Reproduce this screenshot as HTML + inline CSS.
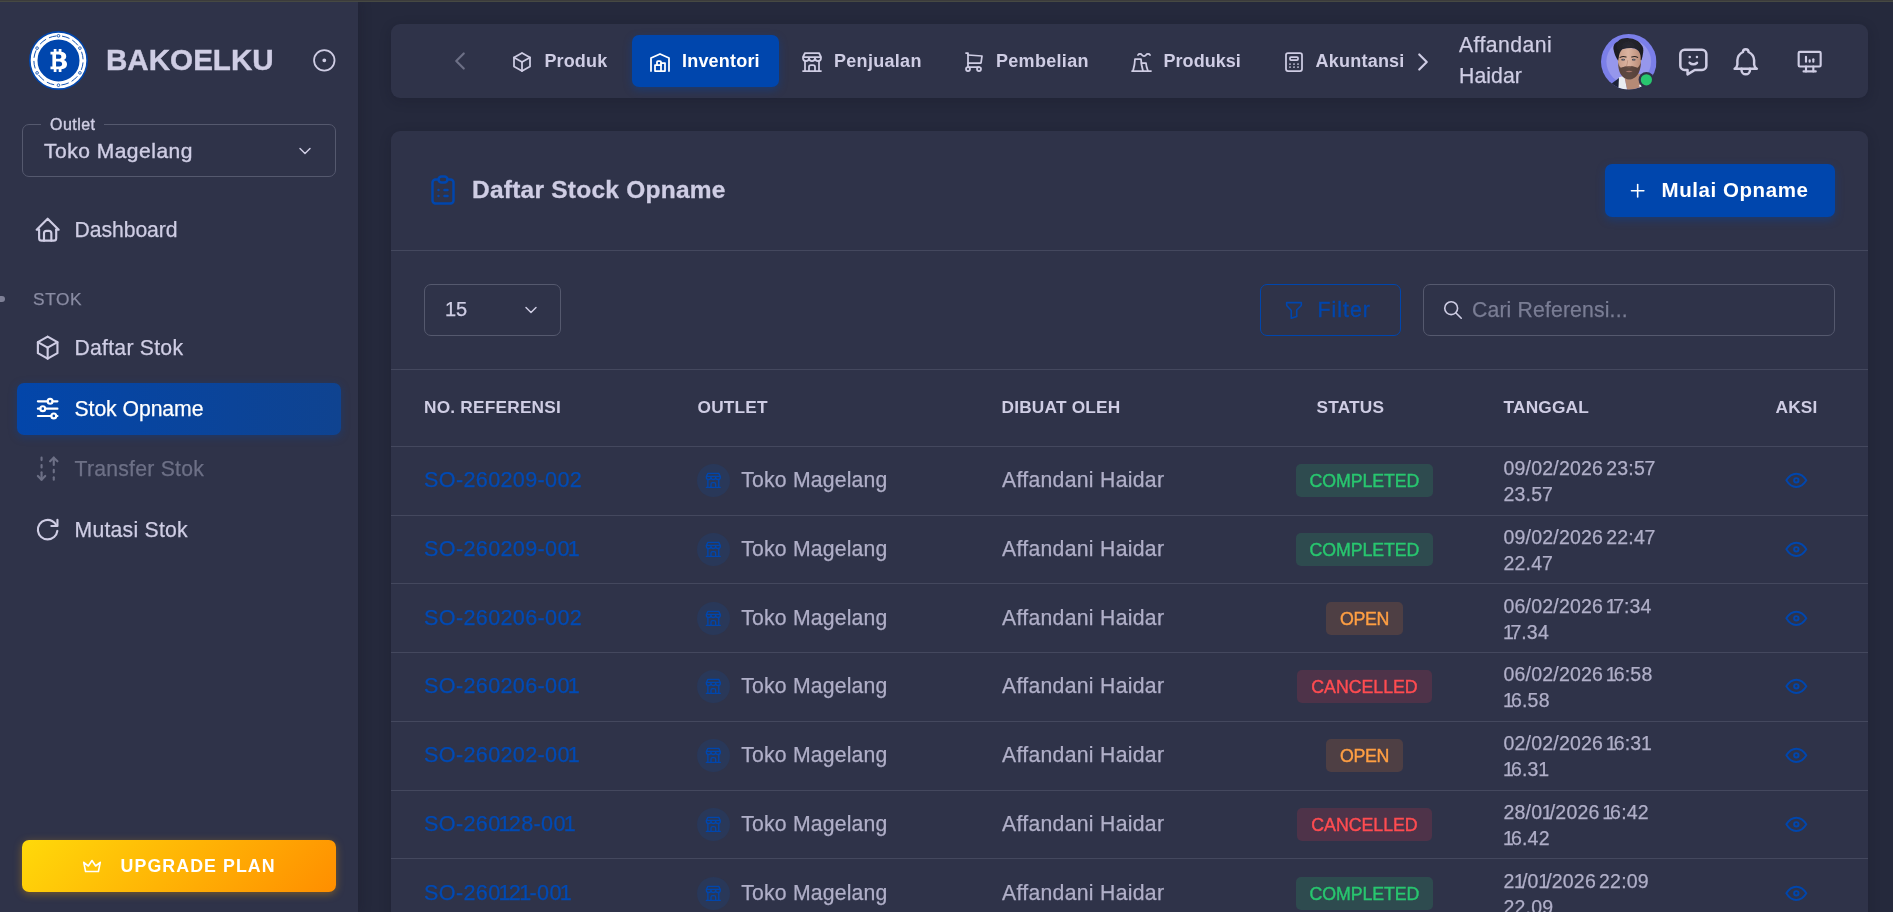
<!DOCTYPE html>
<html lang="id">
<head>
<meta charset="utf-8">
<title>Daftar Stock Opname</title>
<style>
*{box-sizing:border-box;margin:0;padding:0}
html,body{width:1893px;height:912px;overflow:hidden;background:#25293c;font-family:"Liberation Sans",sans-serif;color:#cfcde4}
body{position:relative}
svg.ic{fill:none;stroke:currentColor;stroke-width:1.75;stroke-linecap:round;stroke-linejoin:round;display:block}
.abs{position:absolute}
#side,#nav,#card,#brand,#outlet,.mi,#stok,#upg{will-change:transform}
#topstrip{left:0;top:0;width:1893px;height:2px;background:linear-gradient(#3c3c3c 0 50%,#464943 50% 100%);z-index:5}
/* sidebar */
#side{left:0;top:2px;width:358px;height:910px;background:#2f3349;box-shadow:0 0 12px rgba(19,17,32,.3)}
#brand{left:106px;top:41px;font-size:29.6px;font-weight:700;color:#cfcde4;letter-spacing:0;line-height:38px;-webkit-text-stroke:.4px #cfcde4}
#logo{left:29px;top:31px;width:59px;height:59px}
#pin{left:312.200px;top:48.200px;width:24.600px;height:24.600px;color:#cfcde4}
#outlet{left:22px;top:124px;width:314px;height:53px;border:1px solid #55596e;border-radius:7px}
#outlet .lbl{left:18px;top:-9.300px;background:#2f3349;padding:0 9px;font-size:16px;line-height:18px;color:#cfcde4;letter-spacing:.45px}
#outlet .val{left:21px;top:13px;font-size:21px;line-height:26px;color:#cfcde4;letter-spacing:.5px}
#outlet svg{left:272px;top:16px;width:20px;height:20px;color:#cfcde4}
.mi{left:17px;width:324px;height:52px;border-radius:7px;color:#cfcde4;font-size:21.200px;letter-spacing:.250px;-webkit-text-stroke:.25px currentColor}
.mi svg{position:absolute;left:16px;top:11px;width:29.33px;height:29.33px}
.mi span{position:absolute;left:57.500px;top:12.750px;line-height:26px;white-space:nowrap}
.mi.act{background:linear-gradient(270deg,#0f4390 0%,#0346aa 100%);color:#fff;box-shadow:0 2px 8px 0 rgba(0,70,173,.35)}
.mi.dis{color:#6d7086}
#stok{left:33px;top:289px;font-size:17.3px;line-height:20px;color:#8a8ca3;letter-spacing:.6px;-webkit-text-stroke:.25px currentColor}
#dot{left:0;top:296px;width:5px;height:6px;border-radius:0 3px 3px 0;background:#7e8096}
#upg{left:22px;top:840px;width:314px;height:52px;border-radius:7px;background:linear-gradient(135deg,#ffd90a 0%,#ff8e00 100%);box-shadow:0 2px 8px rgba(255,170,0,.35);color:#fff;font-weight:700;font-size:17.800px;letter-spacing:1.070px}
#upg svg{position:absolute;left:59px;top:15px;width:22px;height:22px}
#upg span{position:absolute;left:98.600px;top:16px;line-height:20px;white-space:nowrap}
/* navbar */
#nav{left:391px;top:24px;width:1477px;height:74px;background:#2f3349;border-radius:9px;box-shadow:0 3px 12px rgba(19,17,32,.22)}
.ni{position:absolute;top:11px;height:52px;border-radius:7px;color:#cfcde4;font-weight:700;font-size:18px;white-space:nowrap;letter-spacing:.3px}
.ni svg{position:absolute;top:14.500px;width:24px;height:24px;margin-left:-.5px}
.ni span{position:absolute;top:14px;line-height:24px}
.ni.act{background:#0046ad;color:#fff;box-shadow:0 3px 8px rgba(0,70,173,.4)}
#uname{left:1068px;top:4.800px;font-size:21.200px;line-height:31px;color:#cfcde4;letter-spacing:.080px}
#avatar{left:1210px;top:10px;width:55.5px;height:55.5px}
.tb{top:20px;width:34.67px;height:34.67px;color:#cfcde4}
/* card */
#card{left:391px;top:131px;width:1477px;height:800px;background:#2f3349;border-radius:9px 9px 0 0;box-shadow:0 3px 12px rgba(19,17,32,.22)}
#title{left:81px;top:43.200px;font-size:24.500px;line-height:32px;font-weight:700;color:#cfcde4;white-space:nowrap;letter-spacing:.240px;-webkit-text-stroke:.300px currentColor}
#btnadd{left:1214px;top:33px;width:230px;height:53px;border-radius:7px;background:#0046ad;color:#fff;box-shadow:0 3px 8px rgba(0,70,173,.4);font-size:20.500px;font-weight:700}
#btnadd svg{left:22.300px;top:15.800px;width:21.330px;height:21.330px}
#btnadd span{left:56.500px;top:13px;line-height:26px;white-space:nowrap;letter-spacing:.570px}
#sel{left:33px;top:153px;width:137px;height:52px;border:1px solid #55596e;border-radius:7px;font-size:20px;color:#cfcde4}
#sel span{left:20px;top:11px;line-height:26px}
#sel svg{left:96px;top:15px;width:20px;height:20px}
#btnf{left:869px;top:153px;width:141px;height:52px;border:1px solid #0046ad;border-radius:7px;color:#0046ad;font-size:21.200px}
#btnf svg{left:22px;top:14px;width:22px;height:22px}
#btnf span{left:56.500px;top:11.750px;line-height:26px;letter-spacing:1.045px;-webkit-text-stroke:.350px currentColor}
#srch{left:1032px;top:153px;width:412px;height:52px;border:1px solid #55596e;border-radius:7px;color:#7a7d94;font-size:21.200px}
#srch svg{left:18px;top:14px;width:22px;height:22px;color:#cfcde4}
#srch span{left:48px;top:11.750px;line-height:26px;white-space:nowrap;letter-spacing:.158px}
.th{top:264.500px;font-size:17.300px;line-height:22px;font-weight:700;color:#cfcde4;white-space:nowrap;letter-spacing:.200px}
.row{left:0;width:1477px;height:69px;font-size:21.200px}
.row span{white-space:nowrap}
.out,.by,.dt,.ref{-webkit-text-stroke:.250px currentColor}
#uname,#sel span,#srch span{-webkit-text-stroke:.250px currentColor}
#outlet .val,#outlet .lbl{-webkit-text-stroke:.400px currentColor}
.ref i{font-style:normal;margin:0 -2px}
.dt i{font-style:normal;margin:0 -3.100px 0 -.500px}
.ref b,.dt b{font-weight:400;margin:0 -.400px}
.rc{left:0;width:1477px;height:69px}
.ref{left:33px;top:21.200px;line-height:26px;font-size:21.600px;color:#004ab4;letter-spacing:.345px}
.oic{left:306.100px;top:18.100px;width:32.800px;height:32.800px;border-radius:50%;background:#293859;color:#0046ad}
.oic svg{position:absolute;left:7.060px;top:7.060px;width:18.670px;height:18.670px;stroke-width:1.750}
.out{left:350.300px;top:20.750px;line-height:26px;color:#b0afc8;letter-spacing:.190px}
.by{left:611px;top:20.750px;line-height:26px;color:#b0afc8;letter-spacing:.300px}
.bdg{top:18px;height:33px;border-radius:5px;font-size:17.800px;line-height:34.600px;text-align:center;letter-spacing:.080px;-webkit-text-stroke:.400px currentColor}
.bdg.c{letter-spacing:-.1px;left:905px;width:137px;background:#2e4b4f;color:#28c76f}
.bdg.o{letter-spacing:-.3px;left:935px;width:77px;background:#4e3f44;color:#ff9f43}
.bdg.x{letter-spacing:-.04px;left:906px;width:135px;background:#4e3349;color:#ff4c51}
.dt{left:1112.500px;top:10.400px;font-size:19.500px;line-height:25.400px;color:#b0afc8;letter-spacing:.200px;word-spacing:-2.500px}
.eye{left:1392.200px;top:21.200px;width:26.670px;height:26.670px;color:#0046ad}
.hr{left:0;width:1477px;height:1px;background:#44485e}
</style>
</head>
<body>
<div id="topstrip" class="abs"></div>
<div id="side" class="abs"></div>
<svg id="logo" class="abs" viewBox="0 0 58 58">
<circle cx="29" cy="29" r="29" fill="#0046ad"/>
<circle cx="29" cy="29" r="24" fill="none" stroke="#fff" stroke-width="6.700"/>
<circle cx="29" cy="29" r="24.200" fill="none" stroke="#0046ad" stroke-width=".900" stroke-dasharray="7.5 3.2 7.5 7.24" stroke-dashoffset="-3.6" transform="rotate(-90 29 29)"/>
<g fill="#fff" stroke="#0046ad" stroke-width=".8"><circle cx="29" cy="4.7" r="1.3"/><circle cx="29" cy="53.3" r="1.3"/><circle cx="7.95" cy="16.85" r="1.3"/><circle cx="50.05" cy="16.85" r="1.3"/><circle cx="7.95" cy="41.15" r="1.3"/><circle cx="50.05" cy="41.15" r="1.3"/></g>
<path fill="#fff" d="M24.3 17.6h2.7v2.6h2.2v-2.6h2.7v2.7c2.9.3 4.7 1.9 4.7 4.4 0 1.9-1 3.2-2.6 3.8 2.1.5 3.4 2 3.4 4.2 0 2.9-2.1 4.6-5.5 4.9v2.7h-2.7v-2.6h-2.2v2.6h-2.7v-2.6h-3.2v-2.8h1.9v-11.8h-1.9v-2.8h3.2zM26.6 23.1v4.2h2.7c1.6 0 2.5-.8 2.5-2.1s-.9-2.1-2.5-2.1zM26.6 30v4.8h3.2c1.8 0 2.8-.9 2.8-2.4s-1-2.4-2.8-2.4z"/>
</svg>
<div id="brand" class="abs">BAKOELKU</div>
<svg id="pin" class="abs ic" viewBox="0 0 24 24"><circle cx="12" cy="12" r="1" fill="currentColor"/><circle cx="12" cy="12" r="10"/></svg>
<div id="outlet" class="abs"><div class="lbl abs">Outlet</div><div class="val abs">Toko Magelang</div><svg class="abs ic" viewBox="0 0 24 24"><path d="M6 9l6 6l6 -6"/></svg></div>
<div class="mi abs" style="top:204px"><svg class="ic" viewBox="0 0 24 24"><path d="M5 12l-2 0l9 -9l9 9l-2 0"/><path d="M5 12v7a2 2 0 0 0 2 2h10a2 2 0 0 0 2 -2v-7"/><path d="M9 21v-6a2 2 0 0 1 2 -2h2a2 2 0 0 1 2 2v6"/></svg><span style="letter-spacing:-.07px">Dashboard</span></div>
<div id="dot" class="abs"></div>
<div id="stok" class="abs">STOK</div>
<div class="mi abs" style="top:322px"><svg class="ic" viewBox="0 0 24 24"><path d="M12 3l8 4.5l0 9l-8 4.5l-8 -4.5l0 -9l8 -4.5"/><path d="M12 12l8 -4.5"/><path d="M12 12l0 9"/><path d="M12 12l-8 -4.5"/></svg><span>Daftar Stok</span></div>
<div class="mi act abs" style="top:383px"><svg class="ic" viewBox="0 0 24 24"><circle cx="14" cy="6" r="2"/><path d="M4 6l8 0"/><path d="M16 6l4 0"/><circle cx="8" cy="12" r="2"/><path d="M4 12l2 0"/><path d="M10 12l10 0"/><circle cx="17" cy="18" r="2"/><path d="M4 18l11 0"/><path d="M19 18l1 0"/></svg><span style="letter-spacing:-.06px">Stok Opname</span></div>
<div class="mi dis abs" style="top:443px"><svg class="ic" viewBox="0 0 24 24"><path d="M7 21v-6"/><path d="M20 6l-3 -3l-3 3"/><path d="M10 18l-3 3l-3 -3"/><path d="M7 3v2"/><path d="M7 9v2"/><path d="M17 3v6"/><path d="M17 21v-2"/><path d="M17 15v-2"/></svg><span>Transfer Stok</span></div>
<div class="mi abs" style="top:504px"><svg class="ic" viewBox="0 0 24 24"><path d="M19.933 13.041a8 8 0 1 1 -9.925 -8.788c3.899 -1 7.935 1.007 9.425 4.747"/><path d="M20 4v5h-5"/></svg><span>Mutasi Stok</span></div>
<div id="upg" class="abs"><svg class="ic" viewBox="0 0 24 24"><path d="M12 6l4 6l5 -4l-2 10h-14l-2 -10l5 4z"/></svg><span>UPGRADE PLAN</span></div>
<div id="nav" class="abs">
<svg class="abs ic" style="left:53.800px;top:22.300px;width:30px;height:30px;color:#6d7086" viewBox="0 0 24 24"><path d="M15 6l-6 6l6 6"/></svg>
<div class="ni" style="left:108px;width:120px"><svg class="ic" style="left:11px" viewBox="0 0 24 24"><path d="M12 3l8 4.5l0 9l-8 4.5l-8 -4.5l0 -9l8 -4.5"/><path d="M12 12l8 -4.5"/><path d="M12 12l0 9"/><path d="M12 12l-8 -4.5"/></svg><span style="left:45.400px;letter-spacing:.15px">Produk</span></div>
<div class="ni act" style="left:241px;width:147px"><svg class="ic" style="left:16px" viewBox="0 0 24 24"><path d="M3 21v-13l9 -4l9 4v13"/><path d="M13 13h4v8h-10v-6h6"/><path d="M13 21v-9a1 1 0 0 0 -1 -1h-2a1 1 0 0 0 -1 1v3"/></svg><span style="left:50px;letter-spacing:.2px">Inventori</span></div>
<div class="ni" style="left:398px;width:150px"><svg class="ic" style="left:11px" viewBox="0 0 24 24"><path d="M3 21l18 0"/><path d="M3 7v1a3 3 0 0 0 6 0v-1m0 1a3 3 0 0 0 6 0v-1m0 1a3 3 0 0 0 6 0v-1h-18l2 -4h14l2 4"/><path d="M5 21l0 -10.15"/><path d="M19 21l0 -10.15"/><path d="M9 21v-4a2 2 0 0 1 2 -2h2a2 2 0 0 1 2 2v4"/></svg><span style="left:45px">Penjualan</span></div>
<div class="ni" style="left:560px;width:150px"><svg class="ic" style="left:11px" viewBox="0 0 24 24"><circle cx="6" cy="19" r="2"/><circle cx="17" cy="19" r="2"/><path d="M17 17h-11v-14h-2"/><path d="M6 5l14 1l-1 7h-13"/></svg><span style="left:45px">Pembelian</span></div>
<div class="ni" style="left:727px;width:150px"><svg class="ic" style="left:11px" viewBox="0 0 24 24"><path d="M4 21c1.147 -4.02 1.983 -8.027 2 -12h6c.017 3.973 .853 7.98 2 12"/><path d="M12.5 13h4.500c.025 2.612 .894 5.296 2 8"/><path d="M9 5a2.400 2.400 0 0 1 2 -1a2.400 2.400 0 0 1 2 1a2.400 2.400 0 0 0 2 1a2.400 2.400 0 0 0 2 -1a2.400 2.400 0 0 1 2 -1a2.400 2.400 0 0 1 2 1"/><path d="M3 21l19 0"/></svg><span style="left:45.500px;letter-spacing:.05px">Produksi</span></div>
<div class="ni" style="left:880px;width:150px"><svg class="ic" style="left:11px" viewBox="0 0 24 24"><rect x="4" y="3" width="16" height="18" rx="2"/><rect x="8" y="7" width="8" height="3" rx="1"/><path d="M8 14l0 .01"/><path d="M12 14l0 .01"/><path d="M16 14l0 .01"/><path d="M8 17l0 .01"/><path d="M12 17l0 .01"/><path d="M16 17l0 .01"/></svg><span style="left:44.500px;letter-spacing:.23px">Akuntansi</span></div>
<svg class="abs ic" style="left:1016.500px;top:22.600px;width:30px;height:30px;color:#cfcde4" viewBox="0 0 24 24"><path d="M9 6l6 6l-6 6"/></svg>
<div class="abs" id="uname"><span style="letter-spacing:.45px">Affandani</span><br>Haidar</div>
<svg class="abs" id="avatar" viewBox="0 0 56 56"><defs><clipPath id="avc"><circle cx="28" cy="28" r="28"/></clipPath>
<filter id="bl" x="-10%" y="-10%" width="120%" height="120%"><feGaussianBlur stdDeviation=".55"/></filter>
<filter id="bl2" x="-20%" y="-20%" width="140%" height="140%"><feGaussianBlur stdDeviation="1.1"/></filter>
<linearGradient id="skin" x1="0" y1="0" x2="1" y2="0"><stop offset="0" stop-color="#c89d88"/><stop offset=".45" stop-color="#dbb4a1"/><stop offset="1" stop-color="#b98b76"/></linearGradient>
<radialGradient id="hair" cx=".5" cy=".35" r=".7"><stop offset="0" stop-color="#2a2a33"/><stop offset="1" stop-color="#17171c"/></radialGradient></defs>
<g clip-path="url(#avc)"><rect width="56" height="56" fill="#7b7fe9"/><circle cx="28" cy="27.800" r="22.600" fill="#9697ec"/>
<g filter="url(#bl)">
<path d="M8 52l10.500-7.800l1 12.800h-12z" fill="#1d2438"/>
<path d="M18.200 43.600l5.300-1.600l3 14.500h-9z" fill="#e9ecf2"/>
<path d="M23 40l16 0l3.500 17h-16z" fill="#b58a76"/>
<path d="M38.300 51.500l3.200-1l.8 3l-3 1z" fill="#e9ecf2"/>
<path d="M17 24.500c-.3-6 2-10.500 11.200-10.500s12.300 4 12.300 10.500c0 4.500-.7 9.500-2.300 13.500c-1.800 4.500-5.500 7.900-9.600 7.900s-8-3.400-9.700-7.900c-1.400-4-1.800-9-1.900-13.500z" fill="url(#skin)"/>
<path d="M17.300 28.500c.6 2.800 1.400 4.600 2.800 5.600c1.700-.4 3.300-1.300 5.200-1.500c2.300-.5 4.600-.5 6.800 0c1.800.3 3.200 1.100 4.800 1.500c1.600-1.200 2.700-3.100 3.400-6.300c.1 4.500-.8 8.300-2.100 11c-1.900 4-5.500 7.100-9.600 7.100s-7.900-3.100-9.600-7.100c-1.200-2.900-1.700-6.300-1.700-10.300z" fill="#3a2a26" opacity=".78"/>
<path d="M24.800 37.600c2.300-.8 5-.8 7.200 0c-2.300 1.200-4.900 1.200-7.200 0z" fill="#a8766a"/>
<path d="M27 26.500c-.3 2.500-.7 4.500-1.300 6c1.500.9 3.700.9 5.100 0" fill="none" stroke="#b08470" stroke-width=".9" opacity=".7"/>
<path d="M12.700 16c-.8-4 1.200-7.500 4.300-8.500c2.300-2.500 6.500-3.600 11-3.300c5.500.3 10.300 2.700 12.500 6.300c2.200 2 2.600 5.300 2 8.500c-.3 2.500-.9 5-1.700 7.500l-.8-.2c.3-3-.1-6.300-1.800-8.600c-1.600-2.200-3.500-3.200-6.200-3.400c-3.500-.3-7 .3-10.500 1c-2.200 2-3.300 5-3.600 8.500l-.6 3.200c-2.100-2.800-3.900-7-4.600-11z" fill="url(#hair)"/>
<path d="M19.300 23.600c1.800-1 4-1.100 6-.4M31 23.200c2-.7 4.200-.6 6 .4" stroke="#2a211f" stroke-width="1.100" fill="none" stroke-linecap="round"/>
<ellipse cx="22.300" cy="25.900" rx="1.900" ry=".95" fill="#46414a"/><ellipse cx="33" cy="25.900" rx="1.900" ry=".95" fill="#46414a"/>
<ellipse cx="22.500" cy="25.900" rx=".8" ry=".7" fill="#6b7884"/><ellipse cx="33.200" cy="25.900" rx=".8" ry=".7" fill="#6b7884"/>
</g></g>
<circle cx="45.800" cy="46.200" r="7.900" fill="#2f3349"/><circle cx="45.800" cy="46.200" r="5.650" fill="#28c76f"/></svg>
<svg class="abs ic tb" style="left:1285.3px" viewBox="0 0 24 24"><path d="M18 4a3 3 0 0 1 3 3v8a3 3 0 0 1 -3 3h-5l-5 3v-3h-2a3 3 0 0 1 -3 -3v-8a3 3 0 0 1 3 -3h12z"/><path d="M9.500 9h.01"/><path d="M14.500 9h.01"/><path d="M9.500 13a3.500 3.500 0 0 0 5 0"/></svg>
<svg class="abs ic tb" style="left:1337.7px;top:20.6px;width:33.5px;height:33.5px" viewBox="0 0 24 24"><path d="M10 5a2 2 0 1 1 4 0a7 7 0 0 1 4 6v3a4 4 0 0 0 2 3h-16a4 4 0 0 0 2 -3v-3a7 7 0 0 1 4 -6"/><path d="M9 17v1a3 3 0 0 0 6 0v-1"/></svg>
<svg class="abs ic tb" style="left:1403.700px;top:22.800px;width:29.330px;height:29.330px" viewBox="0 0 24 24"><rect x="3" y="4" width="18" height="12" rx="1"/><path d="M7 20h10"/><path d="M9 16v4"/><path d="M15 16v4"/><path d="M9 12v-4"/><path d="M12 12v-1"/><path d="M15 12v-2"/></svg>
</div>
<div id="card" class="abs">
<svg class="abs ic" style="left:33.600px;top:41px;width:36px;height:36px;color:#0046ad;stroke-width:1.650" viewBox="0 0 24 24"><path d="M9 5h-2a2 2 0 0 0 -2 2v12a2 2 0 0 0 2 2h10a2 2 0 0 0 2 -2v-12a2 2 0 0 0 -2 -2h-2"/><rect x="9" y="3" width="6" height="4" rx="2"/><path d="M9 12l.01 0"/><path d="M13 12l2 0"/><path d="M9 16l.01 0"/><path d="M13 16l2 0"/></svg>
<div id="title" class="abs">Daftar Stock Opname</div>
<div id="btnadd" class="abs"><svg class="ic abs" viewBox="0 0 24 24"><path d="M12 5l0 14"/><path d="M5 12l14 0"/></svg><span class="abs">Mulai Opname</span></div>
<div class="hr abs" style="top:119px"></div>
<div id="sel" class="abs"><span class="abs">15</span><svg class="ic abs" viewBox="0 0 24 24"><path d="M6 9l6 6l6 -6"/></svg></div>
<div id="btnf" class="abs"><svg class="ic abs" viewBox="0 0 24 24"><path d="M4 4h16v2.172a2 2 0 0 1 -.586 1.414l-4.414 4.414v7l-6 2v-8.500l-4.480 -4.928a2 2 0 0 1 -.520 -1.345v-2.227z"/></svg><span class="abs">Filter</span></div>
<div id="srch" class="abs"><svg class="ic abs" viewBox="0 0 24 24"><circle cx="10" cy="10" r="7"/><path d="M21 21l-6 -6"/></svg><span class="abs">Cari Referensi...</span></div>
<div class="hr abs" style="top:238px"></div>
<div class="th abs" style="left:33px">NO. REFERENSI</div>
<div class="th abs" style="left:306.500px">OUTLET</div>
<div class="th abs" style="left:610.500px">DIBUAT OLEH</div>
<div class="th abs" style="left:925.500px">STATUS</div>
<div class="th abs" style="left:1112.500px">TANGGAL</div>
<div class="th abs" style="left:1384.500px">AKSI</div>
<div class="row abs" style="top:315px"><div class="hr abs" style="top:0"></div><div class="rc abs" style="top:0px"><span class="ref abs">SO-260209-002</span><span class="oic abs"><svg class="ic" viewBox="0 0 24 24"><path d="M3 21l18 0"/><path d="M3 7v1a3 3 0 0 0 6 0v-1m0 1a3 3 0 0 0 6 0v-1m0 1a3 3 0 0 0 6 0v-1h-18l2 -4h14l2 4"/><path d="M5 21l0 -10.150"/><path d="M19 21l0 -10.150"/><path d="M9 21v-4a2 2 0 0 1 2 -2h2a2 2 0 0 1 2 2v4"/></svg></span><span class="out abs">Toko Magelang</span><span class="by abs">Affandani Haidar</span><span class="bdg c abs">COMPLETED</span><span class="dt abs">09/02/2026 23:5<b>7</b><br>23.5<b>7</b></span><svg class="ic eye abs" viewBox="0 0 24 24"><path d="M10 12a2 2 0 1 0 4 0a2 2 0 0 0 -4 0"/><path d="M21 12c-2.400 4 -5.400 6 -9 6c-3.600 0 -6.600 -2 -9 -6c2.400 -4 5.400 -6 9 -6c3.600 0 6.600 2 9 6"/></svg></div></div>
<div class="row abs" style="top:384px"><div class="hr abs" style="top:0"></div><div class="rc abs" style="top:0px"><span class="ref abs">SO-260209-00<i>1</i></span><span class="oic abs"><svg class="ic" viewBox="0 0 24 24"><path d="M3 21l18 0"/><path d="M3 7v1a3 3 0 0 0 6 0v-1m0 1a3 3 0 0 0 6 0v-1m0 1a3 3 0 0 0 6 0v-1h-18l2 -4h14l2 4"/><path d="M5 21l0 -10.150"/><path d="M19 21l0 -10.150"/><path d="M9 21v-4a2 2 0 0 1 2 -2h2a2 2 0 0 1 2 2v4"/></svg></span><span class="out abs">Toko Magelang</span><span class="by abs">Affandani Haidar</span><span class="bdg c abs">COMPLETED</span><span class="dt abs">09/02/2026 22:4<b>7</b><br>22.4<b>7</b></span><svg class="ic eye abs" viewBox="0 0 24 24"><path d="M10 12a2 2 0 1 0 4 0a2 2 0 0 0 -4 0"/><path d="M21 12c-2.400 4 -5.400 6 -9 6c-3.600 0 -6.600 -2 -9 -6c2.400 -4 5.400 -6 9 -6c3.600 0 6.600 2 9 6"/></svg></div></div>
<div class="row abs" style="top:452px"><div class="hr abs" style="top:0"></div><div class="rc abs" style="top:1px"><span class="ref abs">SO-260206-002</span><span class="oic abs"><svg class="ic" viewBox="0 0 24 24"><path d="M3 21l18 0"/><path d="M3 7v1a3 3 0 0 0 6 0v-1m0 1a3 3 0 0 0 6 0v-1m0 1a3 3 0 0 0 6 0v-1h-18l2 -4h14l2 4"/><path d="M5 21l0 -10.150"/><path d="M19 21l0 -10.150"/><path d="M9 21v-4a2 2 0 0 1 2 -2h2a2 2 0 0 1 2 2v4"/></svg></span><span class="out abs">Toko Magelang</span><span class="by abs">Affandani Haidar</span><span class="bdg o abs">OPEN</span><span class="dt abs">06/02/2026 <i>1</i><b>7</b>:34<br><i>1</i><b>7</b>.34</span><svg class="ic eye abs" viewBox="0 0 24 24"><path d="M10 12a2 2 0 1 0 4 0a2 2 0 0 0 -4 0"/><path d="M21 12c-2.400 4 -5.400 6 -9 6c-3.600 0 -6.600 -2 -9 -6c2.400 -4 5.400 -6 9 -6c3.600 0 6.600 2 9 6"/></svg></div></div>
<div class="row abs" style="top:521px"><div class="hr abs" style="top:0"></div><div class="rc abs" style="top:0px"><span class="ref abs">SO-260206-00<i>1</i></span><span class="oic abs"><svg class="ic" viewBox="0 0 24 24"><path d="M3 21l18 0"/><path d="M3 7v1a3 3 0 0 0 6 0v-1m0 1a3 3 0 0 0 6 0v-1m0 1a3 3 0 0 0 6 0v-1h-18l2 -4h14l2 4"/><path d="M5 21l0 -10.150"/><path d="M19 21l0 -10.150"/><path d="M9 21v-4a2 2 0 0 1 2 -2h2a2 2 0 0 1 2 2v4"/></svg></span><span class="out abs">Toko Magelang</span><span class="by abs">Affandani Haidar</span><span class="bdg x abs">CANCELLED</span><span class="dt abs">06/02/2026 <i>1</i>6:58<br><i>1</i>6.58</span><svg class="ic eye abs" viewBox="0 0 24 24"><path d="M10 12a2 2 0 1 0 4 0a2 2 0 0 0 -4 0"/><path d="M21 12c-2.400 4 -5.400 6 -9 6c-3.600 0 -6.600 -2 -9 -6c2.400 -4 5.400 -6 9 -6c3.600 0 6.600 2 9 6"/></svg></div></div>
<div class="row abs" style="top:590px"><div class="hr abs" style="top:0"></div><div class="rc abs" style="top:0px"><span class="ref abs">SO-260202-00<i>1</i></span><span class="oic abs"><svg class="ic" viewBox="0 0 24 24"><path d="M3 21l18 0"/><path d="M3 7v1a3 3 0 0 0 6 0v-1m0 1a3 3 0 0 0 6 0v-1m0 1a3 3 0 0 0 6 0v-1h-18l2 -4h14l2 4"/><path d="M5 21l0 -10.150"/><path d="M19 21l0 -10.150"/><path d="M9 21v-4a2 2 0 0 1 2 -2h2a2 2 0 0 1 2 2v4"/></svg></span><span class="out abs">Toko Magelang</span><span class="by abs">Affandani Haidar</span><span class="bdg o abs">OPEN</span><span class="dt abs">02/02/2026 <i>1</i>6:3<i>1</i><br><i>1</i>6.3<i>1</i></span><svg class="ic eye abs" viewBox="0 0 24 24"><path d="M10 12a2 2 0 1 0 4 0a2 2 0 0 0 -4 0"/><path d="M21 12c-2.400 4 -5.400 6 -9 6c-3.600 0 -6.600 -2 -9 -6c2.400 -4 5.400 -6 9 -6c3.600 0 6.600 2 9 6"/></svg></div></div>
<div class="row abs" style="top:659px"><div class="hr abs" style="top:0"></div><div class="rc abs" style="top:0px"><span class="ref abs">SO-260<i>1</i>28-00<i>1</i></span><span class="oic abs"><svg class="ic" viewBox="0 0 24 24"><path d="M3 21l18 0"/><path d="M3 7v1a3 3 0 0 0 6 0v-1m0 1a3 3 0 0 0 6 0v-1m0 1a3 3 0 0 0 6 0v-1h-18l2 -4h14l2 4"/><path d="M5 21l0 -10.150"/><path d="M19 21l0 -10.150"/><path d="M9 21v-4a2 2 0 0 1 2 -2h2a2 2 0 0 1 2 2v4"/></svg></span><span class="out abs">Toko Magelang</span><span class="by abs">Affandani Haidar</span><span class="bdg x abs">CANCELLED</span><span class="dt abs">28/0<i>1</i>/2026 <i>1</i>6:42<br><i>1</i>6.42</span><svg class="ic eye abs" viewBox="0 0 24 24"><path d="M10 12a2 2 0 1 0 4 0a2 2 0 0 0 -4 0"/><path d="M21 12c-2.400 4 -5.400 6 -9 6c-3.600 0 -6.600 -2 -9 -6c2.400 -4 5.400 -6 9 -6c3.600 0 6.600 2 9 6"/></svg></div></div>
<div class="row abs" style="top:727px"><div class="hr abs" style="top:0"></div><div class="rc abs" style="top:1px"><span class="ref abs">SO-260<i>1</i>2<i>1</i>-00<i>1</i></span><span class="oic abs"><svg class="ic" viewBox="0 0 24 24"><path d="M3 21l18 0"/><path d="M3 7v1a3 3 0 0 0 6 0v-1m0 1a3 3 0 0 0 6 0v-1m0 1a3 3 0 0 0 6 0v-1h-18l2 -4h14l2 4"/><path d="M5 21l0 -10.150"/><path d="M19 21l0 -10.150"/><path d="M9 21v-4a2 2 0 0 1 2 -2h2a2 2 0 0 1 2 2v4"/></svg></span><span class="out abs">Toko Magelang</span><span class="by abs">Affandani Haidar</span><span class="bdg c abs">COMPLETED</span><span class="dt abs">2<i>1</i>/0<i>1</i>/2026 22:09<br>22.09</span><svg class="ic eye abs" viewBox="0 0 24 24"><path d="M10 12a2 2 0 1 0 4 0a2 2 0 0 0 -4 0"/><path d="M21 12c-2.400 4 -5.400 6 -9 6c-3.600 0 -6.600 -2 -9 -6c2.400 -4 5.400 -6 9 -6c3.600 0 6.600 2 9 6"/></svg></div></div>
</div>
</body>
</html>
